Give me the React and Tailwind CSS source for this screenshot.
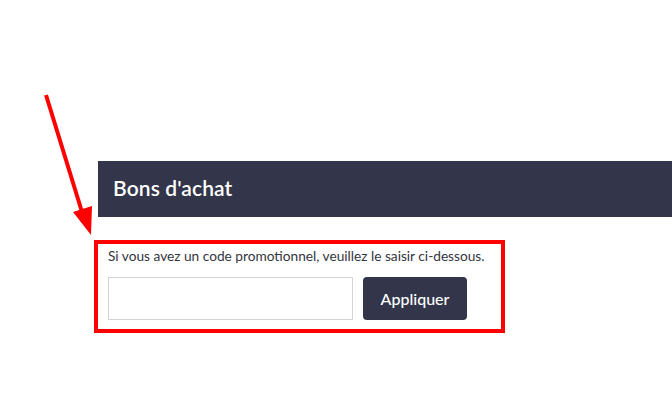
import React from "react";

export default function App() {
  return (
    <div className="relative w-[672px] h-[401px] bg-white overflow-hidden" style={{ fontFamily: "Lato, 'Open Sans', sans-serif" }}>
      <div className="pt-[161px] pl-[98px]">
        <div className="h-[56px] bg-[#33364a] flex items-center pl-[15px] pb-[3px]">
          <h2 className="text-white text-[21px] font-semibold tracking-[0.1px] leading-none">Bons d'achat</h2>
        </div>
        <div className="mt-[23px] -ml-[4px] w-[411px] h-[93px] border-4 border-[#ff0000] pl-[10px] pt-[4px]">
          <p className="text-[13.7px] leading-[16px] text-[#333640]">Si vous avez un code promotionnel, veuillez le saisir ci-dessous.</p>
          <div className="mt-[13px] flex gap-[10px]">
            <input className="w-[245px] h-[43px] border border-[#d4d4d8] bg-white outline-none" />
            <button className="w-[104px] h-[43px] rounded-[4px] bg-[#33364a] text-white text-[16px] font-medium">Appliquer</button>
          </div>
        </div>
      </div>
      <svg className="absolute left-0 top-0" width="672" height="401" viewBox="0 0 672 401">
        <line x1="46" y1="95" x2="82" y2="212" stroke="#ff0000" strokeWidth="4" />
        <polygon points="73,212 92,206 91,235" fill="#ff0000" />
      </svg>
    </div>
  );
}
